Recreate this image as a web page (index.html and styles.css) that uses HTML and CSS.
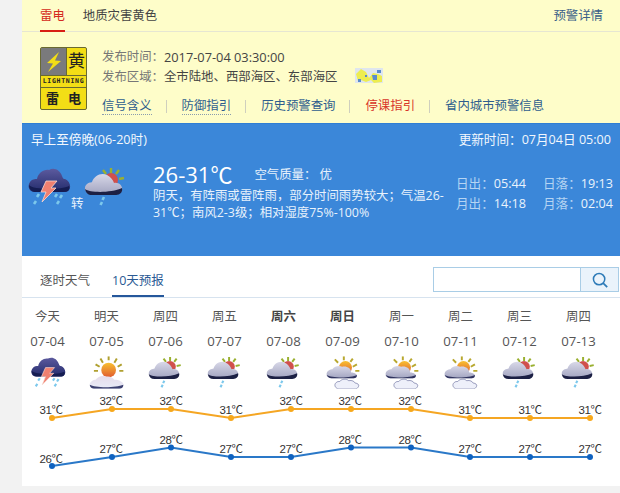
FILE: index.html
```html
<!DOCTYPE html>
<html lang="zh">
<head>
<meta charset="utf-8">
<title>天气预报</title>
<link rel="stylesheet" href="styles.css">
</head>
<body>
<svg class="defs" width="0" height="0" aria-hidden="true">
  <defs>
    <linearGradient id="gDark" x1="0" y1="0" x2="0" y2="1"><stop offset="0" stop-color="#5c5a9e"/><stop offset="1" stop-color="#232c6c"/></linearGradient>
    <linearGradient id="gLight" x1="0" y1="0" x2="0" y2="1"><stop offset="0" stop-color="#d8d8e8"/><stop offset="1" stop-color="#a2a4c0"/></linearGradient>
    <linearGradient id="gPale" x1="0" y1="0" x2="0" y2="1"><stop offset="0" stop-color="#e6dcea"/><stop offset="1" stop-color="#e8ecf8"/></linearGradient>
    <linearGradient id="gSun" x1="0" y1="0" x2="0" y2="1"><stop offset="0" stop-color="#f8c030"/><stop offset="1" stop-color="#e05a30"/></linearGradient>
    <symbol id="thunder" viewBox="0 0 44 40">
      <path d="M8 25C2 25 0 19 3 15c2-3 5-3 7-3C11 6 17 2 22 3c5-3 11 0 13 6 1 3 2 3 3 3 5 2 7 9 3 12-1 1-3 1-5 1z" fill="url(#gDark)"/>
      <path d="M2 18c4 5 32 5 40 1 1 3 0 6-6 6H8c-3 0-6-3-6-7z" fill="#151d52"/>
      <path d="M19 14h11l-6 7h5L15 35l4-10h-5z" fill="#f08070" stroke="#f8d8d0" stroke-width=".8"/>
      <path d="M12 27l-2 3M9 34l-2 3M30 27l-2 3M35 28l-2 3M32 34l-2 3" stroke="#7cc8ec" stroke-width="2.600"/>
    </symbol>
    <symbol id="cloudrain" viewBox="0 0 44 40">
      <path d="M27 1v5M35 3l-3 4M40 11l-5 1M19 3l3 4" stroke="#9ab030" stroke-width="2.400"/>
      <circle cx="27" cy="13" r="7" fill="#d0504c"/>
      <path d="M7 27C1 27-1 20 3 17c2-2 4-1 5-2C10 9 17 5 23 8c4 2 6 5 7 8 5-1 9 3 8 7-1 3-3 4-5 4z" fill="url(#gLight)"/>
      <path d="M1 22c5 4 26 4 37-1 1 4-2 7-6 7H8c-4 0-6-2-7-6z" fill="#1c2044"/>
      <path d="M20 30l-1.500 3M18 35l-1.500 3" stroke="#7cc8ec" stroke-width="2.600"/>
    </symbol>
    <symbol id="suncloud" viewBox="0 0 44 40">
      <path d="M24 0v5M14 3l3 5M34 3l-3 5M8 10l5 3M40 10l-5 3M6 18h5M42 18h-5" stroke="#b0a030" stroke-width="2.400"/>
      <circle cx="24" cy="17" r="9" fill="url(#gSun)"/>
      <path d="M7 40c-6 0-8-6-4-9 2-2 4-2 5-2 3-4 8-6 13-4 4-1 8 1 10 4 6 0 12 3 11 7-1 3-3 4-5 4z" fill="url(#gPale)"/>
      <path d="M1 35c6 4 32 4 41 0 0 3-2 5-5 5H7c-3 0-6-2-6-5z" fill="#3c4070"/>
    </symbol>
    <symbol id="sundouble" viewBox="0 0 44 40">
      <path d="M23 0v5M12 4l4 4M34 3l-3 4M39 10l-5 3M42 18h-5" stroke="#b8a830" stroke-width="2.400"/>
      <circle cx="25" cy="14" r="8" fill="url(#gSun)"/>
      <path d="M8 27c-6 0-8-6-4-9 2-2 4-2 5-2 3-4 8-5 12-3 6-1 11 2 11 7 5 0 8 3 7 5-1 2-2 2-4 2z" fill="url(#gLight)"/>
      <path d="M2 23c6 4 30 4 37 0 0 2-1 4-4 4H8c-3 0-5-2-6-4z" fill="#30345f"/>
      <path d="M17 40c-4 0-7-5-3-8 1-1 3-1 4-1 2-3 8-4 11-1 4-1 7 1 8 3 3 0 5 2 4 4-1 2-2 3-4 3z" fill="#eef0fa" stroke="#6a6e9c" stroke-width=".8"/>
    </symbol>
  </defs>
</svg>
<main class="page">
  <section class="alert">
    <header class="alert-tabs">
      <nav class="alert-tablist">
        <span class="alert-tab is-active">雷电</span>
        <span class="alert-tab">地质灾害黄色</span>
      </nav>
      <a class="alert-detail">预警详情</a>
    </header>
    <div class="alert-body">
      <div class="signal">
        <div class="signal-top">
          <div class="signal-bolt">
            <svg viewBox="0 0 25 25" width="25" height="25"><path d="M18 3 6 14l6 .5L7 23l13-11-6-.5 4-8.500z" fill="#f3de16"/></svg>
          </div>
          <div class="signal-level">黄</div>
        </div>
        <div class="signal-en">LIGHTNING</div>
        <div class="signal-cn"><span>雷</span><span>电</span></div>
      </div>
      <div class="alert-info">
        <p class="info-row"><span class="info-key">发布时间：</span><span class="info-time">2017-07-04 03:30:00</span></p>
        <p class="info-row"><span class="info-key">发布区域：</span>全市陆地、西部海区、东部海区
          <svg class="info-map" viewBox="0 0 28 15" width="28" height="15">
            <rect width="28" height="15" fill="#dfe6ee"/>
            <path d="M1 6 6 1l5 3 3 6 4-5 5 1 4 2v6l-8 1-3-3-5 2-5-2-3 1z" fill="#eded50"/>
            <path d="M17 7h5v5h-4zM3 11h3v3H3zM22 2h4v3h-4zM10 7h2v2h-2z" fill="#5a8ccc"/>
          </svg>
        </p>
        <p class="info-links">
          <a class="info-link">信号含义</a><i class="sep"></i>
          <a class="info-link">防御指引</a><i class="sep"></i>
          <a class="info-link is-plain">历史预警查询</a><i class="sep"></i>
          <a class="info-link is-red">停课指引</a><i class="sep"></i>
          <a class="info-link is-plain">省内城市预警信息</a>
        </p>
      </div>
    </div>
  </section>

  <section class="now">
    <div class="now-head">
      <span>早上至傍晚(06-20时)</span>
      <span>更新时间：07月04日 05:00</span>
    </div>
    <div class="now-main">
      <div class="now-icons">
        <svg class="now-icon" viewBox="0 0 44 40"><use href="#thunder"/></svg>
        <span class="now-turn">转</span>
        <svg class="now-icon" viewBox="0 0 44 40"><use href="#cloudrain"/></svg>
      </div>
      <div class="now-text">
        <div class="now-temp-row">
          <span class="now-temp">26-31℃</span>
          <span class="now-air">空气质量： 优</span>
        </div>
        <p class="now-desc">阴天，有阵雨或雷阵雨，部分时间雨势较大；气温26-<br>31℃；南风2-3级；相对湿度75%-100%</p>
      </div>
      <dl class="now-sun">
        <div><dt>日出：</dt><dd>05:44</dd></div>
        <div><dt>日落：</dt><dd>19:13</dd></div>
        <div><dt>月出：</dt><dd>14:18</dd></div>
        <div><dt>月落：</dt><dd>02:04</dd></div>
      </dl>
    </div>
  </section>

  <section class="forecast">
    <header class="fc-bar">
      <nav class="fc-tabs">
        <span class="fc-tab">逐时天气</span>
        <span class="fc-tab is-active">10天预报</span>
      </nav>
      <div class="search">
        <div class="search-input"></div>
        <div class="search-btn">
          <svg viewBox="0 0 20 20" width="18" height="18"><circle cx="9" cy="9" r="6.300" fill="none" stroke="#2d7bb8" stroke-width="1.700"/><path d="m13.500 13.500 4.500 4.500" stroke="#2d7bb8" stroke-width="1.900"/></svg>
        </div>
      </div>
    </header>
    <div class="days">
      <div class="day"><b class="dname">今天</b><span class="ddate">07-04</span><svg class="dicon" viewBox="0 0 44 40"><use href="#thunder"/></svg></div>
      <div class="day"><b class="dname">明天</b><span class="ddate">07-05</span><svg class="dicon" viewBox="0 0 44 40"><use href="#suncloud"/></svg></div>
      <div class="day"><b class="dname">周四</b><span class="ddate">07-06</span><svg class="dicon" viewBox="0 0 44 40"><use href="#cloudrain"/></svg></div>
      <div class="day"><b class="dname">周五</b><span class="ddate">07-07</span><svg class="dicon" viewBox="0 0 44 40"><use href="#cloudrain"/></svg></div>
      <div class="day"><b class="dname is-bold">周六</b><span class="ddate">07-08</span><svg class="dicon" viewBox="0 0 44 40"><use href="#cloudrain"/></svg></div>
      <div class="day"><b class="dname is-bold">周日</b><span class="ddate">07-09</span><svg class="dicon" viewBox="0 0 44 40"><use href="#sundouble"/></svg></div>
      <div class="day"><b class="dname">周一</b><span class="ddate">07-10</span><svg class="dicon" viewBox="0 0 44 40"><use href="#sundouble"/></svg></div>
      <div class="day"><b class="dname">周二</b><span class="ddate">07-11</span><svg class="dicon" viewBox="0 0 44 40"><use href="#sundouble"/></svg></div>
      <div class="day"><b class="dname">周三</b><span class="ddate">07-12</span><svg class="dicon" viewBox="0 0 44 40"><use href="#cloudrain"/></svg></div>
      <div class="day"><b class="dname">周四</b><span class="ddate">07-13</span><svg class="dicon" viewBox="0 0 44 40"><use href="#cloudrain"/></svg></div>
    </div>
    <svg class="chart" viewBox="22 392 598 94" width="598" height="94">
      <polyline class="line-high" points="52,418 112,409 171,409 231,418 291,409 351,409 411,409 470,418 530,418 590,418"/>
      <polyline class="line-low" points="52,466 112,457 171,447.500 231,457 291,457 351,447.500 411,447.500 470,457 530,457 590,457"/>
      <g class="dots-high">
        <circle cx="52" cy="418" r="3"/><circle cx="112" cy="409" r="3"/><circle cx="171" cy="409" r="3"/><circle cx="231" cy="418" r="3"/><circle cx="291" cy="409" r="3"/><circle cx="351" cy="409" r="3"/><circle cx="411" cy="409" r="3"/><circle cx="470" cy="418" r="3"/><circle cx="530" cy="418" r="3"/><circle cx="590" cy="418" r="3"/>
      </g>
      <g class="dots-low">
        <circle cx="52" cy="466" r="3"/><circle cx="112" cy="457" r="3"/><circle cx="171" cy="447.500" r="3"/><circle cx="231" cy="457" r="3"/><circle cx="291" cy="457" r="3"/><circle cx="351" cy="447.500" r="3"/><circle cx="411" cy="447.500" r="3"/><circle cx="470" cy="457" r="3"/><circle cx="530" cy="457" r="3"/><circle cx="590" cy="457" r="3"/>
      </g>
      <g class="labels">
        <text x="51" y="414">31℃</text><text x="111" y="405">32℃</text><text x="171" y="405">32℃</text><text x="231" y="414">31℃</text><text x="291" y="405">32℃</text><text x="350" y="405">32℃</text><text x="410" y="405">32℃</text><text x="470" y="414">31℃</text><text x="530" y="414">31℃</text><text x="590" y="414">31℃</text>
        <text x="51" y="463">26℃</text><text x="111" y="453">27℃</text><text x="171" y="444">28℃</text><text x="231" y="453">27℃</text><text x="291" y="453">27℃</text><text x="350" y="444">28℃</text><text x="410" y="444">28℃</text><text x="470" y="453">27℃</text><text x="530" y="453">27℃</text><text x="590" y="453">27℃</text>
      </g>
    </svg>
  </section>
</main>
</body>
</html>
```
FILE: styles.css
```css
* { box-sizing: border-box; }
html, body { margin: 0; padding: 0; }
body {
  width: 620px;
  height: 493px;
  overflow: hidden;
  background: #f2f2f2;
  font-family: "Open Sans", "Noto Sans CJK SC", sans-serif;
  font-size: 12.400px;
  color: #444;
}
.defs { position: absolute; }
p, dl, dd { margin: 0; }
.page { margin-left: 22px; width: 598px; }

.alert { height: 123px; background: #fefdc9; }
.alert-tabs {
  height: 32px;
  display: flex;
  justify-content: space-between;
  padding: 0 17px 0 18px;
  border-bottom: 1px solid #e6e6d2;
}
.alert-tablist { display: flex; gap: 18px; }
.alert-tab { line-height: 31px; height: 32px; color: #444; }
.alert-tab.is-active { color: #d42a20; border-bottom: 2px solid #d81e14; }
.alert-detail { line-height: 31px; color: #3a5f88; }
.alert-body { display: flex; padding: 15px 0 0 18px; gap: 15px; }

.signal {
  width: 47px;
  height: 63px;
  border: 1px solid #6a6a30;
  border-radius: 2px;
  background: #f3de16;
  display: flex;
  flex-direction: column;
  color: #222;
}
.signal-top { height: 28px; display: flex; border-bottom: 1px solid #6a6a30; }
.signal-bolt { width: 26px; background: #7a7a7c; border-right: 1px solid #6a6a30; display: flex; align-items: center; justify-content: center; }
.signal-level { flex: 1; text-align: center; font-size: 17px; line-height: 26px; }
.signal-en { height: 12px; font: bold 6.500px/11px "DejaVu Sans Mono", monospace; text-align: center; border-bottom: 1px solid #6a6a30; letter-spacing: .7px; color: #222; }
.signal-cn { flex: 1; display: flex; justify-content: center; gap: 9px; font-size: 13px; font-weight: 700; line-height: 20px; }

.alert-info { display: flex; flex-direction: column; }
.info-row { height: 20px; line-height: 20px; display: flex; align-items: center; color: #444; }
.info-key { color: #777; }
.info-time { font-size: 12.800px; }
.info-map { margin: 0 0 4px 18px; }
.info-links { margin-top: 9px; height: 20px; display: flex; align-items: center; }
.info-link { color: #2e5d8e; border-bottom: 1px dotted #8a9cae; line-height: 15px; height: 17px; }
.info-link.is-red { color: #d8352a; border-bottom: 0; }
.info-link.is-plain { border-bottom: 0; }
.sep { width: 1px; height: 13px; background: #cfcfbe; margin: 0 15px 0 14px; }

.now { height: 133px; background: #3b87d9; color: #fff; border-top: 1px solid #2f7ed4; }
.now-head { display: flex; justify-content: space-between; padding: 7px 9px 0 9px; line-height: 18px; color: #f2f7fd; font-size: 12.600px; }
.now-main { display: flex; padding-top: 8px; }
.now-icons { width: 131px; flex: none; padding: 10px 0 0 5px; display: flex; align-items: flex-start; }
.now-icon { width: 44px; height: 40px; flex: none; }
.now-turn { margin-top: 28px; flex: none; width: 13px; line-height: 18px; color: #e8f2fc; }
.now-text { width: 294px; flex: none; }
.now-temp-row { display: flex; align-items: center; height: 34px; gap: 22px; }
.now-temp { font-size: 22px; line-height: 34px; color: #fff; }
.now-air { color: #e8f2fc; }
.now-desc { line-height: 16.500px; color: #e8f2fc; margin-top: -3px; white-space: nowrap; }
.now-sun {
  margin: 17px 0 0 9px;
  display: grid;
  grid-template-columns: 68px 68px;
  gap: 0 19px;
  align-content: start;
  font-size: 12.600px;
}
.now-sun div { display: flex; height: 20px; line-height: 20px; white-space: nowrap; }
.now-sun dt { color: #b5d4f3; }
.now-sun dd { color: #eaf3fc; }

.forecast { height: 230px; background: #fff; }
.fc-bar {
  height: 42px;
  display: flex;
  justify-content: space-between;
  padding: 11px 1px 0 18px;
  border-bottom: 1px solid #d7e3ef;
}
.fc-tabs { display: flex; gap: 22px; }
.fc-tab { height: 30px; line-height: 28px; color: #555; font-size: 12.500px; }
.fc-tab.is-active { color: #2a5a94; border-bottom: 2px solid #25579b; }
.search { width: 186px; height: 25px; display: flex; border: 1px solid #a9cde6; }
.search-input { flex: 1; background: #fff; }
.search-btn { width: 38px; border-left: 1px solid #a9cde6; background: #eaf3fb; display: flex; align-items: center; justify-content: center; }

.days { display: flex; margin-left: -4px; padding-top: 8px; }
.day { width: 59px; height: 86px; flex: none; display: flex; flex-direction: column; align-items: center; }
.dname { font-weight: 400; line-height: 22px; color: #555; }
.dname.is-bold { font-weight: 700; color: #444; }
.ddate { line-height: 24px; color: #555; font-size: 13.200px; margin-top: 1px; }
.dicon { width: 36px; height: 33px; margin-top: 3px; }

.chart { display: block; overflow: visible; }
.line-high, .line-low { fill: none; stroke-width: 2; }
.line-high { stroke: #f5a623; }
.line-low { stroke: #2a78c8; }
.dots-high { fill: #f7a81b; }
.dots-low { fill: #0f62c0; }
.labels text { font-family: "Liberation Sans", "Noto Sans CJK SC", sans-serif; font-size: 11.500px; letter-spacing: -.5px; text-anchor: middle; fill: #333; }
```
